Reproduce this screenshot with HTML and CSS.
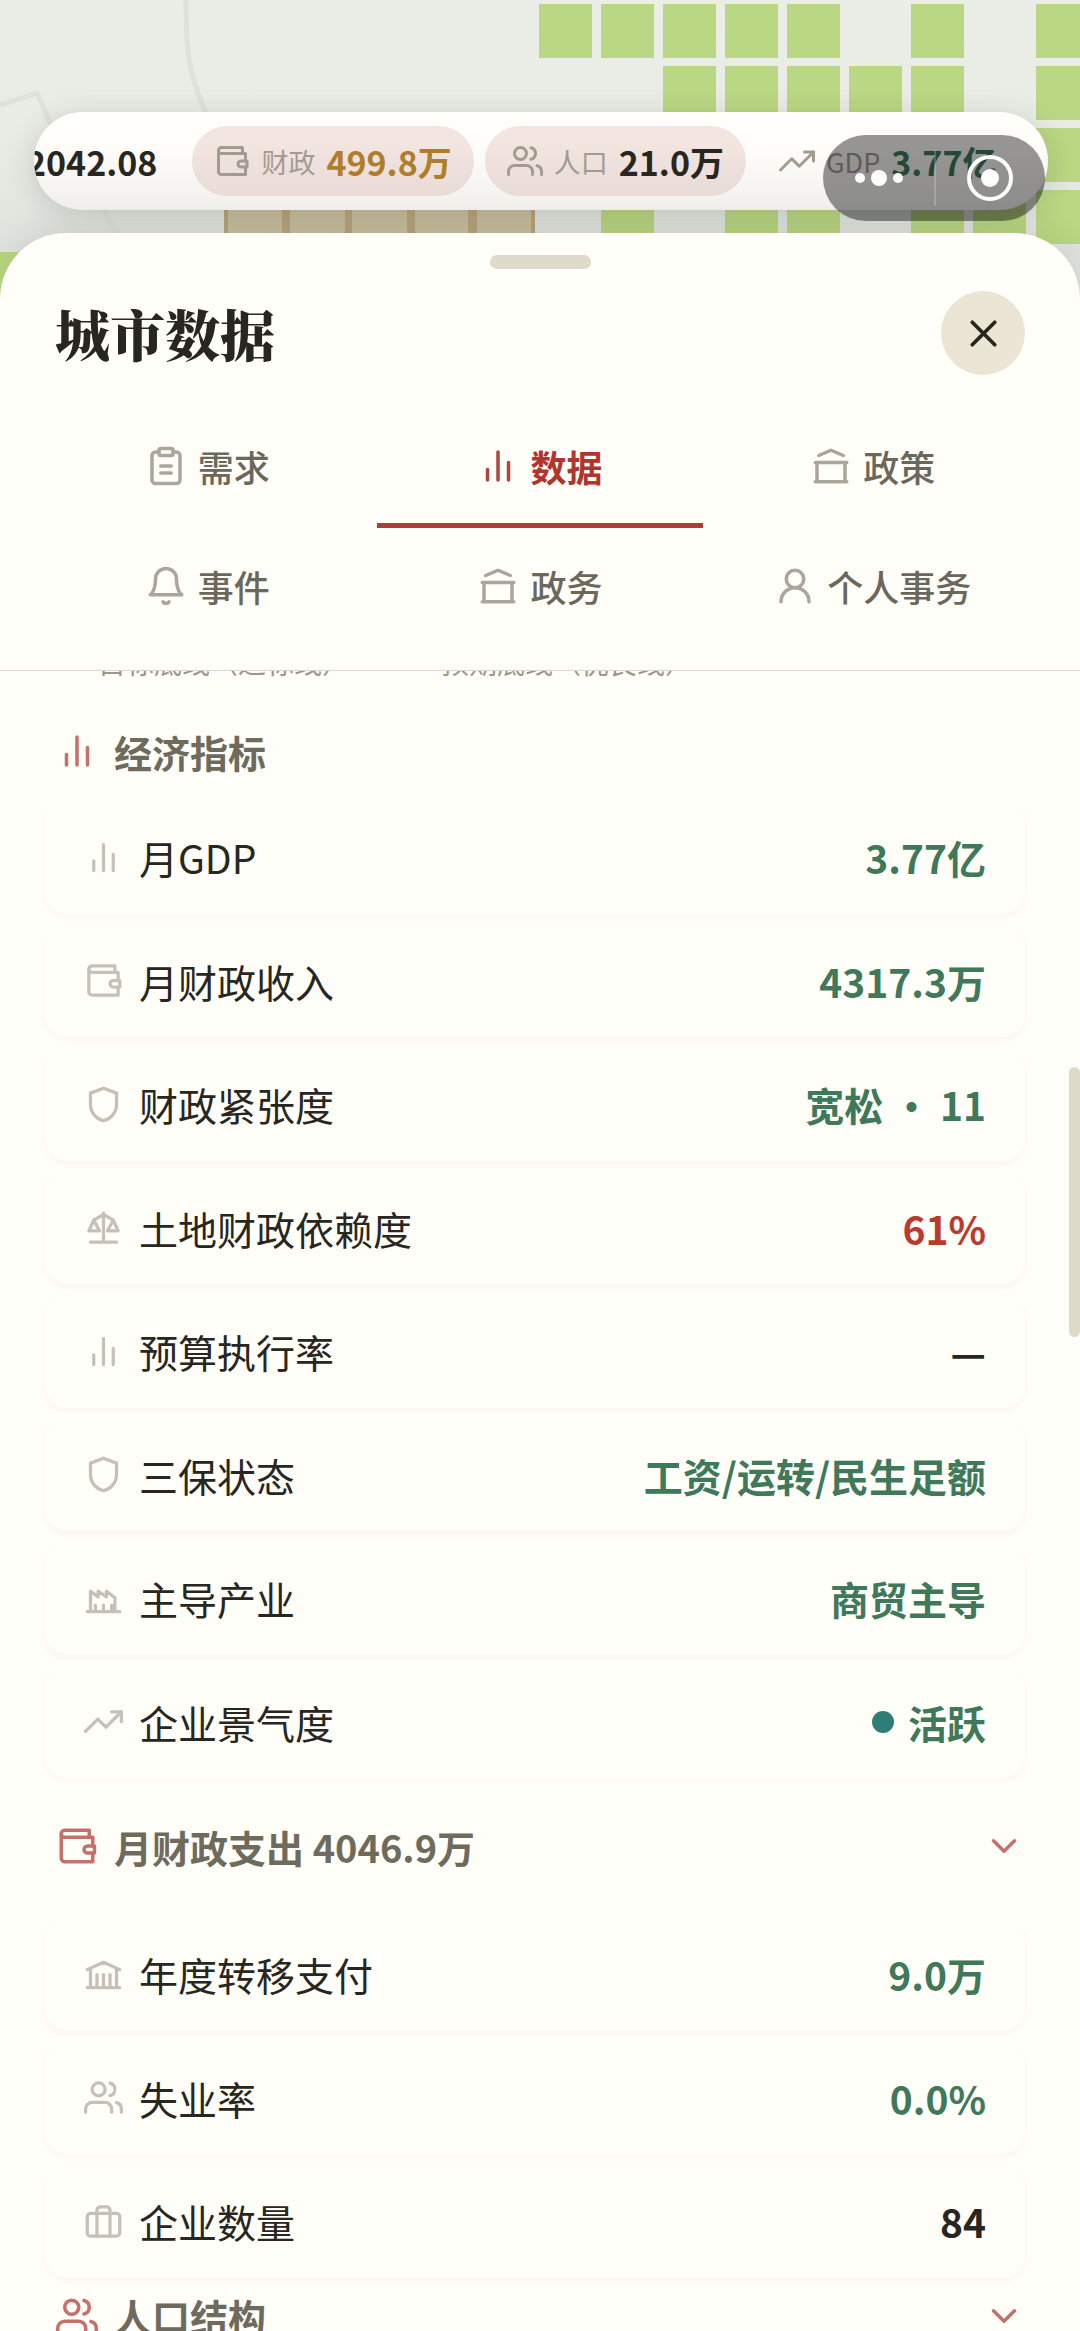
FILE: index.html
```html
<!DOCTYPE html>
<html lang="zh-CN">
<head>
    <meta charset="UTF-8">
    <meta name="viewport" content="width=device-width, initial-scale=1.0">
    <title>城市数据</title>
    <link rel="stylesheet" href="styles.css">
</head>
<body>
    <!-- shared icons -->
    <svg class="sprite" aria-hidden="true">
        <symbol id="i-bars" viewBox="0 0 24 24"><path d="M18 20V10M12 20V4M6 20v-6"/></symbol>
        <symbol id="i-wallet" viewBox="0 0 24 24"><path d="M21 12V7H5a2 2 0 0 1 0-4h14v4"/><path d="M3 5v14a2 2 0 0 0 2 2h16v-5"/><path d="M18 12a2 2 0 0 0 0 4h4v-4z"/></symbol>
        <symbol id="i-users" viewBox="0 0 24 24"><path d="M17 21v-2a4 4 0 0 0-4-4H5a4 4 0 0 0-4 4v2"/><circle cx="9" cy="7" r="4"/><path d="M23 21v-2a4 4 0 0 0-3-3.87M16 3.13a4 4 0 0 1 0 7.75"/></symbol>
        <symbol id="i-trend" viewBox="0 0 24 24"><path d="M23 6l-9.5 9.5-5-5L1 18"/><path d="M17 6h6v6"/></symbol>
        <symbol id="i-clipboard" viewBox="0 0 24 24"><path d="M16 4h2a2 2 0 0 1 2 2v14a2 2 0 0 1-2 2H6a2 2 0 0 1-2-2V6a2 2 0 0 1 2-2h2"/><rect x="8" y="2" width="8" height="4" rx="1"/><path d="M9 12h6M9 16h6"/></symbol>
        <symbol id="i-hall" viewBox="0 0 24 24"><path d="M3 21h18M3 10h18M5 6l7-3 7 3M4 10v11M20 10v11"/></symbol>
        <symbol id="i-bell" viewBox="0 0 24 24"><path d="M18 8A6 6 0 0 0 6 8c0 7-3 9-3 9h18s-3-2-3-9"/><path d="M13.73 21a2 2 0 0 1-3.46 0"/></symbol>
        <symbol id="i-user" viewBox="0 0 24 24"><circle cx="12" cy="8" r="5"/><path d="M20 21a8 8 0 0 0-16 0"/></symbol>
        <symbol id="i-shield" viewBox="0 0 24 24"><path d="M12 2L4 5v7c0 5.500 4 9 8 10 4-1 8-4.500 8-10V5z"/></symbol>
        <symbol id="i-scale" viewBox="0 0 24 24"><path d="M12 3v18M4 21h16M6 7.500l6-3.500 6 3.500"/><path d="M6 7.500L3 14h6.500zM18 7.500L14.500 14H21z"/></symbol>
        <symbol id="i-factory" viewBox="0 0 24 24"><path d="M2 20h20M4 20V7.500l4.700 3.500V7.500l5.100 3.500V7.500l5.200 4V20M7 16v4M12 16v4M17 16v4"/></symbol>
        <symbol id="i-bank" viewBox="0 0 24 24"><path d="M2 20h20M2 9l10-4.500L22 9M4 9v11M20 9v11M8 12v8M12 12v8M16 12v8"/></symbol>
        <symbol id="i-case" viewBox="0 0 24 24"><rect x="2" y="7" width="20" height="14" rx="2"/><path d="M8 21V5a2 2 0 0 1 2-2h4a2 2 0 0 1 2 2v16"/></symbol>
        <symbol id="i-down" viewBox="0 0 24 24"><path d="M6 9l6 6 6-6"/></symbol>
        <symbol id="i-close" viewBox="0 0 24 24"><path d="M18 6L6 18M6 6l12 12"/></symbol>
    </svg>

    <div class="app">
        <!-- city map -->
        <svg class="map" width="1140" height="330" aria-hidden="true">
            <defs>
                <linearGradient id="ground" x1="0" y1="0" x2="0" y2="1">
                    <stop offset="0" stop-color="#eaeee6"/>
                    <stop offset="0.4" stop-color="#e8ece4"/>
                    <stop offset="1" stop-color="#dcdfda"/>
                </linearGradient>
            </defs>
            <rect width="1140" height="330" fill="url(#ground)"/>
            <g fill="none" stroke="#dfe1da" stroke-width="5">
                <path d="M186 0c0 50 2 72 20 114"/>
                <path d="M0 105l37-12 14 32 54 87 20 36"/>
            </g>
            <g fill="#bad783">
                <path d="M539 4h53v54h-53zM601 4h53v54h-53zM663 4h53v54h-53zM725 4h53v54h-53zM787 4h53v54h-53zM911 4h53v54h-53zM1036 4h53v54h-53z"/>
                <path d="M663 66h53v54h-53zM725 66h53v54h-53zM787 66h53v54h-53zM849 66h53v54h-53zM911 66h53v54h-53zM1036 66h53v54h-53z"/>
                <path d="M1036 128h53v54h-53z"/>
                <path d="M601 190h53v54h-53zM725 190h53v54h-53zM787 190h53v54h-53zM911 190h53v54h-53zM973 190h53v54h-53zM1036 190h53v54h-53z"/>
                <path d="M0 252h60v60H0z"/>
            </g>
            <path fill="#b9a67c" d="M224 190h311v54H224z"/>
            <path fill="#c9c09f" d="M228 190h54v54h-54zM290 190h55v54h-55zM352 190h55v54h-55zM415 190h53v54h-53zM477 190h54v54h-54z"/>
        </svg>

        <div class="hud">
            <div class="hud-track">
                <span class="hud-date">2042.08</span>
                <div class="hud-list">
                    <div class="pill">
                        <svg class="icon icon-sm"><use href="#i-wallet"/></svg>
                        <span class="pill-label">财政</span>
                        <b class="pill-value gold">499.8万</b>
                    </div>
                    <div class="pill">
                        <svg class="icon icon-sm"><use href="#i-users"/></svg>
                        <span class="pill-label">人口</span>
                        <b class="pill-value">21.0万</b>
                    </div>
                    <div class="pill plain">
                        <svg class="icon icon-sm"><use href="#i-trend"/></svg>
                        <span class="pill-label">GDP</span>
                        <b class="pill-value good">3.77亿</b>
                    </div>
                </div>
            </div>
        </div>

        <div class="capsule">
            <button class="capsule-btn" aria-label="更多">
                <svg width="50" height="20" viewBox="0 0 50 20" fill="#fff"><circle cx="6" cy="10" r="5"/><circle cx="25" cy="10" r="8"/><circle cx="44" cy="10" r="5"/></svg>
            </button>
            <button class="capsule-btn" aria-label="关闭小程序">
                <svg width="48" height="48" viewBox="0 0 48 48"><circle cx="24" cy="24" r="21" fill="none" stroke="#fff" stroke-width="4"/><circle cx="24" cy="24" r="9" fill="#fff"/></svg>
            </button>
        </div>

        <main class="sheet">
            <header class="sheet-head">
                <div class="handle"></div>
                <div class="title-row">
                    <h1 class="title">城市数据</h1>
                    <button class="close" aria-label="关闭"><svg class="icon icon-close"><use href="#i-close"/></svg></button>
                </div>
                <nav class="tabs">
                    <button class="tab"><svg class="icon icon-lg"><use href="#i-clipboard"/></svg>需求</button>
                    <button class="tab active"><svg class="icon icon-lg"><use href="#i-bars"/></svg>数据</button>
                    <button class="tab"><svg class="icon icon-lg"><use href="#i-hall"/></svg>政策</button>
                    <button class="tab"><svg class="icon icon-lg"><use href="#i-bell"/></svg>事件</button>
                    <button class="tab"><svg class="icon icon-lg"><use href="#i-hall"/></svg>政务</button>
                    <button class="tab"><svg class="icon icon-lg"><use href="#i-user"/></svg>个人事务</button>
                </nav>
            </header>

            <div class="sheet-body">
                <div class="legend">
                    <span>目标底线（达标线）</span>
                    <span>预期底线（优良线）</span>
                </div>

                <h2 class="section-head"><svg class="icon icon-lg"><use href="#i-bars"/></svg>经济指标</h2>
                <ul class="rows">
                    <li class="row"><svg class="icon"><use href="#i-bars"/></svg><span class="name">月GDP</span><b class="value good">3.77亿</b></li>
                    <li class="row"><svg class="icon"><use href="#i-wallet"/></svg><span class="name">月财政收入</span><b class="value good">4317.3万</b></li>
                    <li class="row"><svg class="icon"><use href="#i-shield"/></svg><span class="name">财政紧张度</span><b class="value good">宽松 ・ 11</b></li>
                    <li class="row"><svg class="icon"><use href="#i-scale"/></svg><span class="name">土地财政依赖度</span><b class="value bad">61%</b></li>
                    <li class="row"><svg class="icon"><use href="#i-bars"/></svg><span class="name">预算执行率</span><b class="value">—</b></li>
                    <li class="row"><svg class="icon"><use href="#i-shield"/></svg><span class="name">三保状态</span><b class="value good">工资/运转/民生足额</b></li>
                    <li class="row"><svg class="icon"><use href="#i-factory"/></svg><span class="name">主导产业</span><b class="value good">商贸主导</b></li>
                    <li class="row"><svg class="icon"><use href="#i-trend"/></svg><span class="name">企业景气度</span><b class="value good"><i class="dot"></i>活跃</b></li>
                </ul>

                <button class="section-head spaced"><svg class="icon icon-lg"><use href="#i-wallet"/></svg>月财政支出 4046.9万<svg class="icon icon-lg arrow"><use href="#i-down"/></svg></button>
                <ul class="rows">
                    <li class="row"><svg class="icon"><use href="#i-bank"/></svg><span class="name">年度转移支付</span><b class="value good">9.0万</b></li>
                    <li class="row"><svg class="icon"><use href="#i-users"/></svg><span class="name">失业率</span><b class="value good">0.0%</b></li>
                    <li class="row"><svg class="icon"><use href="#i-case"/></svg><span class="name">企业数量</span><b class="value">84</b></li>
                </ul>

                <button class="section-head"><svg class="icon icon-lg"><use href="#i-users"/></svg>人口结构<svg class="icon icon-lg arrow"><use href="#i-down"/></svg></button>
                <div class="scrollbar"></div>
            </div>
        </main>
    </div>
</body>
</html>
```
FILE: styles.css
```css
* {
    box-sizing: border-box;
}
body {
    margin: 0;
    font-family: "Noto Sans CJK SC", "Noto Sans", sans-serif;
    color: #282620;
    background: #e9ede5;
}
button {
    margin: 0;
    padding: 0;
    border: none;
    background: none;
    font: inherit;
    color: inherit;
    cursor: pointer;
}
.sprite {
    display: none;
}
.icon {
    flex: none;
    width: 39px;
    height: 39px;
    fill: none;
    stroke: currentColor;
    stroke-width: 2;
    stroke-linecap: round;
    stroke-linejoin: round;
}
.icon-sm {
    width: 36px;
    height: 36px;
}
.icon-lg {
    width: 42px;
    height: 42px;
}
.app {
    position: relative;
    display: flex;
    flex-direction: column;
    height: 100vh;
    padding-top: 112px;
    overflow: hidden;
}
.map {
    position: absolute;
    top: 0;
    left: 0;
}

/* top status bar */
.hud {
    position: relative;
    flex: none;
    height: 98px;
    margin: 0 32px 23px 34px;
    border-radius: 49px;
    overflow: hidden;
    background: linear-gradient(#fffefb 30%, #f1f0ed);
    box-shadow: 0 6px 30px rgba(40, 40, 30, 0.16);
}
.hud-track {
    display: flex;
    align-items: center;
    gap: 35px;
    height: 100%;
    margin-left: -8px;
    white-space: nowrap;
}
.hud-date {
    font-size: 34px;
    font-weight: 700;
}
.hud-list {
    display: flex;
    gap: 11px;
}
.pill {
    display: flex;
    align-items: center;
    gap: 11px;
    height: 70px;
    padding: 0 22px;
    border-radius: 35px;
    background: rgba(150, 30, 10, 0.11);
    color: #a39b90;
}
.pill.plain {
    background: none;
}
.pill-label {
    font-size: 27px;
    font-weight: 400;
}
.pill-value {
    font-size: 34px;
    color: #282620;
}
.pill-value.gold {
    color: #b07d2b;
}
.good,
.pill-value.good {
    color: #40795a;
}
.bad {
    color: #b93a2f;
}
.capsule {
    position: absolute;
    top: 135px;
    right: 35px;
    z-index: 2;
    display: flex;
    width: 222px;
    height: 86px;
    border-radius: 43px;
    background: rgba(0, 0, 0, 0.41);
}
.capsule-btn {
    flex: 1;
    display: flex;
    align-items: center;
    justify-content: center;
}
.capsule-btn + .capsule-btn::before {
    content: "";
    position: absolute;
    left: 50%;
    width: 2px;
    height: 56px;
    background: rgba(255, 255, 255, 0.2);
}

/* bottom sheet */
.sheet {
    position: relative;
    flex: 1;
    display: flex;
    flex-direction: column;
    min-height: 0;
    border-radius: 66px 66px 0 0;
    background: #fffef9;
    box-shadow: 0 -6px 36px rgba(40, 40, 30, 0.1);
}
.sheet-head {
    flex: none;
    padding: 22px 0;
    border-bottom: 1px solid #d9d7ca;
}
.handle {
    width: 101px;
    height: 14px;
    margin: 0 auto 22px;
    border-radius: 7px;
    background: #dfdac9;
}
.title-row {
    display: flex;
    align-items: center;
    justify-content: space-between;
    padding: 0 55px;
    margin-bottom: 33px;
}
.title {
    margin: 0;
    font-family: "Noto Serif CJK SC", "Noto Sans CJK SC", serif;
    font-size: 55px;
    font-weight: 900;
    line-height: 84px;
}
.close {
    display: flex;
    align-items: center;
    justify-content: center;
    width: 84px;
    height: 84px;
    border-radius: 50%;
    background: #ebe5d6;
}
.icon-close {
    width: 45px;
    height: 45px;
}
.tabs {
    display: grid;
    grid-template-columns: repeat(3, 1fr);
    column-gap: 6px;
    padding: 0 44px;
}
.tab {
    display: flex;
    align-items: center;
    justify-content: center;
    gap: 11px;
    height: 120px;
    border-bottom: 5px solid transparent;
    font-size: 36px;
    font-weight: 500;
    color: #6b675b;
}
.tab .icon {
    color: #a9a69c;
}
.tab.active {
    border-bottom-color: #ae3d37;
    font-weight: 700;
    color: #b0352f;
}
.tab.active .icon {
    color: #b0453f;
}
.sheet-body {
    position: relative;
    flex: 1;
    min-height: 0;
    padding: 0 55px 0 45px;
    overflow: hidden;
}
/* list is scrolled, only the bottom edge of the legend shows */
.legend {
    display: flex;
    margin: -29px 0 31px;
    padding-left: 53px;
    font-size: 28px;
    line-height: 40px;
    color: #9c978b;
}
.legend span {
    width: 343px;
}
.section-head {
    display: flex;
    align-items: center;
    gap: 16px;
    width: 100%;
    height: 76px;
    margin: 0 0 12px;
    padding-left: 11px;
    font-size: 38px;
    font-weight: 700;
    color: #6f6b5c;
}
.section-head.spaced {
    margin: 30px 0 34px;
}
.section-head .icon {
    color: #c4716b;
}
.section-head .arrow {
    margin-left: auto;
}
.rows {
    display: flex;
    flex-direction: column;
    gap: 11px;
    margin: 0;
    padding: 0;
    list-style: none;
}
.row {
    display: flex;
    align-items: center;
    padding: 27px 39px;
    border-radius: 22px;
    background: #fffef9;
    box-shadow: 0 3px 6px rgba(60, 50, 30, 0.04);
    font-size: 39px;
    line-height: 1.5;
}
.row .icon {
    color: #c5c1b7;
}
.name {
    margin-left: 16px;
}
.value {
    display: flex;
    align-items: center;
    gap: 14px;
    margin-left: auto;
}
.dot {
    width: 22px;
    height: 22px;
    border-radius: 50%;
    background: #2d7f76;
}
.scrollbar {
    position: absolute;
    top: 396px;
    right: 0;
    width: 11px;
    height: 270px;
    border-radius: 6px;
    background: #dedaca;
}
```
